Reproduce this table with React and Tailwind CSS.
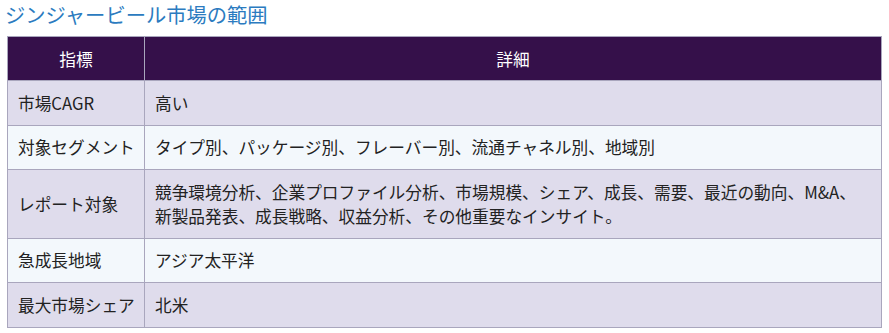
import React from "react";

const rows = [
  ["市場CAGR", "高い"],
  ["対象セグメント", "タイプ別、パッケージ別、フレーバー別、流通チャネル別、地域別"],
  ["レポート対象", <>競争環境分析、企業プロファイル分析、市場規模、シェア、成長、需要、最近の動向、M&A、<br />新製品発表、成長戦略、収益分析、その他重要なインサイト。</>],
  ["急成長地域", "アジア太平洋"],
  ["最大市場シェア", "北米"],
];

export default function App() {
  return (
    <div className="w-[889px] h-[333px] bg-white overflow-hidden" style={{ fontFamily: '"Noto Sans CJK JP", "Noto Sans", sans-serif' }}>
      <h2 className="pl-[5px] pt-[1px] text-[20.3px] leading-[26px] text-[#2b7bc0] font-normal">ジンジャービール市場の範囲</h2>
      <table className="ml-[7px] mt-[9px] w-[875px] table-fixed border-collapse text-[16.7px] leading-[24px] text-[#222]">
        <colgroup>
          <col className="w-[137px]" />
          <col />
        </colgroup>
        <thead>
          <tr className="bg-[#35104a] text-white">
            <th className="h-[44px] border border-[#a9a6bd] font-normal text-center">指標</th>
            <th className="h-[44px] border border-[#a9a6bd] font-normal text-center">詳細</th>
          </tr>
        </thead>
        <tbody>
          {rows.map((r, i) => (
            <tr key={i} className={i % 2 === 0 ? "bg-[#dfdcec]" : "bg-[#f3f8fc]"}>
              <td className="border border-[#a9a6bd] pl-[10px] pr-0 py-[9.75px] align-middle whitespace-nowrap">{r[0]}</td>
              <td className="border border-[#a9a6bd] px-[10px] py-[9.75px] align-middle">{r[1]}</td>
            </tr>
          ))}
        </tbody>
      </table>
    </div>
  );
}
